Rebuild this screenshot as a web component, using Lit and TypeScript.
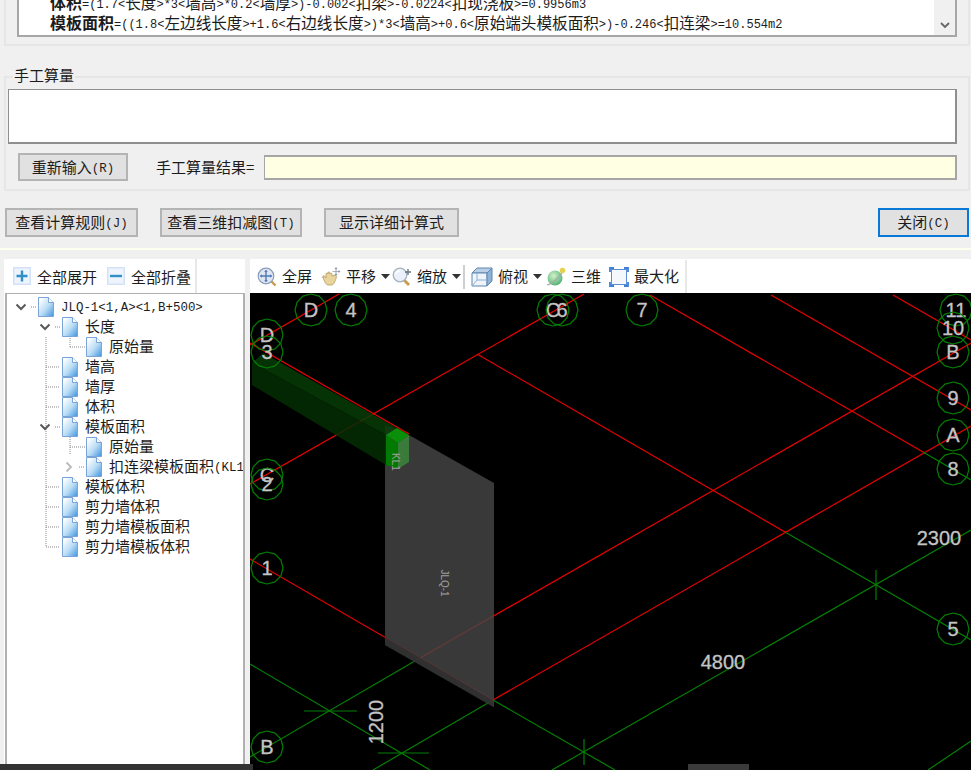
import { LitElement, css, html, svg } from 'lit';
import { customElement } from 'lit/decorators.js';

// latin runs sit in a mono face at half the CJK advance, like the original GDI font
const mix = (s: string) =>
  s.split(/([\x00-\x7f]+)/).map((p, i) => (i % 2 ? html`<span class="lat">${p}</span>` : p));

type TreeRow = { label: string; depth: number; toggle?: 'open' | 'closed' };

const TREE: TreeRow[] = [
  { label: 'JLQ-1<1,A><1,B+500>', depth: 0, toggle: 'open' },
  { label: '长度', depth: 1, toggle: 'open' },
  { label: '原始量', depth: 2 },
  { label: '墙高', depth: 1 },
  { label: '墙厚', depth: 1 },
  { label: '体积', depth: 1 },
  { label: '模板面积', depth: 1, toggle: 'open' },
  { label: '原始量', depth: 2 },
  { label: '扣连梁模板面积(KL1', depth: 2, toggle: 'closed' },
  { label: '模板体积', depth: 1 },
  { label: '剪力墙体积', depth: 1 },
  { label: '剪力墙模板面积', depth: 1 },
  { label: '剪力墙模板体积', depth: 1 },
];

// guide dots, in tree coordinates (tree box starts at 5,293)
const GUIDES = [
  [26, 14, 31, 14], [50, 34, 55, 34], [41, 44, 41, 254],
  [65, 45, 65, 54], [65, 54, 80, 54], [41, 74, 55, 74], [41, 94, 55, 94], [41, 114, 55, 114],
  [50, 134, 55, 134], [65, 144, 65, 162], [65, 154, 80, 154], [74, 174, 80, 174],
  [41, 194, 55, 194], [41, 214, 55, 214], [41, 234, 55, 234], [41, 254, 55, 254],
];

const RED = [
  [250, 345, 339, 294], [250, 484, 584, 294], [250, 343, 409, 434],
  [477, 354, 785, 532], [250, 559, 493, 700], [420, 658, 971, 343], [493, 700, 971, 426],
  [650, 295, 923, 452], [771, 295, 971, 410], [893, 295, 971, 340],
];

const GREEN = [
  [785, 532, 971, 640], [493, 700, 615, 770], [250, 757, 420, 658], [373, 770, 493, 700],
  [250, 664, 430, 770], [552, 770, 971, 530], [928, 770, 971, 741], [923, 452, 971, 480],
  [304, 711, 357, 711], [378, 753, 429, 753], [584, 739, 584, 765], [876, 570, 876, 600],
];

const BUBBLES: [number, number, string][] = [
  [311, 310, 'D'], [351, 310, '4'], [553, 310, 'C'], [562, 310, '6'], [642, 310, '7'],
  [267, 335, 'D'], [267, 352, '3'], [267, 475, 'C'], [267, 484, '2'], [267, 568, '1'], [267, 747, 'B'],
  [956, 310, '11'], [953, 328, '10'], [953, 352, 'B'], [953, 398, '9'], [953, 435, 'A'], [953, 469, '8'], [953, 629, '5'],
];

const ring = (cx: number, cy: number) =>
  Array.from({ length: 12 }, (_, i) => {
    const a = (i * Math.PI) / 6;
    return `${(cx + 16 * Math.sin(a)).toFixed(1)},${(cy - 16 * Math.cos(a)).toFixed(1)}`;
  }).join(' ');

const docIcon = html`<svg class="doc" width="16" height="20" viewBox="0 0 16 20">
  <defs><linearGradient id="dg" x1="0" y1="0" x2="1" y2="1">
    <stop offset="0.1" stop-color="#fff" /><stop offset="0.55" stop-color="#b9dcf5" /><stop offset="1" stop-color="#3f93de" />
  </linearGradient></defs>
  <path d="M.5.5H10.5L15.5 5.5V19.5H.5Z" fill="url(#dg)" stroke="#7aa3d8" />
  <path d="M10.5.5V5.5H15.5" fill="#fff" stroke="#7aa3d8" />
</svg>`;

const chevron = (kind: 'open' | 'closed') =>
  kind === 'open'
    ? html`<svg width="12" height="8" viewBox="0 0 12 8"><path d="M1.5 1.5 6 6l4.5-4.5" fill="none" stroke="#595959" stroke-width="2" /></svg>`
    : html`<svg width="8" height="12" viewBox="0 0 8 12"><path d="M1.5 1.5 6 6l-4.5 4.5" fill="none" stroke="#bdbdbd" stroke-width="2" /></svg>`;

const caret = html`<svg class="caret" width="9" height="5" viewBox="0 0 9 5"><path d="M0 0h9L4.5 5Z" fill="#333" /></svg>`;

const icons = {
  plus: html`<svg width="18" height="18" viewBox="0 0 18 18"><rect width="18" height="18" fill="#d3e2f8" /><rect x="1.500" y="1.500" width="15" height="15" fill="#eef4fc" /><path d="M3.500 9h11M9 3.500v11" stroke="#2f8fc8" stroke-width="2.400" /></svg>`,
  minus: html`<svg width="18" height="18" viewBox="0 0 18 18"><rect width="18" height="18" fill="#d3e2f8" /><rect x="1.500" y="1.500" width="15" height="15" fill="#eef4fc" /><path d="M3 9h12" stroke="#2f8fc8" stroke-width="2.400" /></svg>`,
  full: html`<svg width="20" height="20" viewBox="0 0 20 20"><path d="M14 14l4.500 4.500" stroke="#c99a4a" stroke-width="2.400" /><circle cx="9" cy="9" r="7.800" fill="#dfe6f2" stroke="#8b9cb8" stroke-width="1.200" /><path d="M9 3.500v11M3.500 9h11" stroke="#4f79b8" stroke-width="1.400" /><path d="M9 2.800 7.200 5h3.600ZM9 15.200 7.200 13h3.600ZM2.800 9 5 7.200v3.600ZM15.200 9 13 7.200v3.600Z" fill="#4f79b8" /></svg>`,
  pan: html`<svg width="20" height="20" viewBox="0 0 20 20"><path d="M2 11c-1-2 1-3 2-1.500L5 11V7c0-1.500 2-1.500 2 0V6c0-1.500 2-1.500 2 0v1c0-1 2-1 2 0v2l2-.5c2-.5 3 .5 2 3-1 3-2 6.500-5 6.500H7c-2 0-4-4-5-8Z" fill="#e8d49c" stroke="#b59a5e" stroke-width=".8" /><path d="M15 1v7M11.500 4.500h7" stroke="#a7b0bc" stroke-width="1.200" /><path d="M15 0l-1.500 2h3ZM19.500 4.500l-2-1.500v3ZM15 9l-1.500-2h3Z" fill="#8d97a4" /></svg>`,
  zoom: html`<svg width="20" height="20" viewBox="0 0 20 20"><path d="M12 13l5 5" stroke="#c99a4a" stroke-width="2.800" /><circle cx="8" cy="8" r="6.800" fill="#eaf1fa" stroke="#a7b2c0" stroke-width="1.300" /><path d="M4 7a4 4 0 0 1 4-3" stroke="#fff" stroke-width="1.500" fill="none" /><path d="M16 2v6M13 5h6" stroke="#66707c" stroke-width="1.300" /></svg>`,
  cube: html`<svg width="22" height="20" viewBox="0 0 22 20"><path d="M1 6 6 1H21L16 6Z" fill="#b9cfe6" stroke="#5f86b0" /><path d="M1 6H16V19H1Z" fill="#eef4fa" stroke="#5f86b0" /><path d="M16 6 21 1V14L16 19Z" fill="#8fb2d4" stroke="#5f86b0" /><path d="M1 19 6 13H16M6 13V6" fill="none" stroke="#8fb2d4" /></svg>`,
  globe: html`<svg width="20" height="20" viewBox="0 0 20 20"><defs><radialGradient id="gg" cx=".4" cy=".35" r=".75"><stop offset="0" stop-color="#d4f0c8" /><stop offset="1" stop-color="#3fae6a" /></radialGradient></defs><circle cx="9" cy="11" r="7.500" fill="url(#gg)" /><path d="M1 18C6 17 14 10 18 3" fill="none" stroke="#a8a8a8" stroke-width="1.200" /><circle cx="16.500" cy="3.500" r="2.800" fill="#e4d24e" /></svg>`,
  max: html`<svg width="20" height="20" viewBox="0 0 20 20"><rect x="2.500" y="2.500" width="15" height="15" fill="#f4f8fd" stroke="#5b8fd9" /><path d="M1 5V1H5M15 1h4v4M19 15v4h-4M5 19H1v-4" fill="none" stroke="#3f7fd6" stroke-width="1.800" /></svg>`,
};

@customElement('app-root')
export class AppRoot extends LitElement {
  static override styles = css`
    :host {
      display: block;
      position: relative;
      width: 971px;
      height: 770px;
      overflow: hidden;
      background: #f0f0f0;
      color: #1c1c1c;
      font-family: 'Noto Sans CJK SC', sans-serif;
      font-size: 15px;
    }
    .lat {
      font-family: 'Liberation Mono', monospace;
      font-size: 0.83em;
      vertical-align: 1px;
    }
    svg {
      flex: none;
    }
    .dialog {
      height: 248px;
      display: flex;
      flex-direction: column;
    }
    .group {
      box-sizing: border-box;
      margin-left: 4px;
      width: 966px;
      border: 2px solid #e6e6e6;
    }
    .result {
      height: 46px;
      border-top: none;
      padding: 0 11px 7px 11px;
    }
    .formula {
      box-sizing: border-box;
      height: 37px;
      border: 1px solid #a6a6a6;
      border-width: 0 2px 2px 2px;
      background: #fff;
      display: flex;
      overflow: hidden;
    }
    .lines {
      flex: 1;
      padding-left: 31px;
      margin-top: -8px;
      font-size: 15.6px;
      white-space: nowrap;
      overflow: hidden;
    }
    .lines > div {
      height: 20px;
      line-height: 20px;
    }
    .lines .lat {
      font-size: 12px;
    }
    .lines b {
      font-size: 16px;
    }
    .scroll {
      width: 21px;
      background: #f0f0f0;
      display: flex;
      align-items: flex-end;
      justify-content: center;
      padding-bottom: 6px;
    }
    .manual {
      position: relative;
      margin-top: 30px;
      height: 115px;
      padding: 11px 11px 0 2px;
    }
    .legend {
      position: absolute;
      left: 7px;
      top: -13px;
      padding: 0 1px;
      line-height: 20px;
      background: #f0f0f0;
    }
    .area {
      height: 55px;
      box-sizing: border-box;
      border: 2px solid #8f8f8f;
      border-width: 1px 2px 2px 1px;
      background: #fff;
    }
    .inputrow {
      display: flex;
      align-items: center;
      margin: 9px 0 0 10px;
    }
    .btn {
      box-sizing: border-box;
      height: 29px;
      display: flex;
      align-items: center;
      justify-content: center;
      padding-bottom: 2px;
      background: #e1e1e1;
      border: 2px solid #b4b4b4;
      white-space: nowrap;
    }
    .inputrow .btn {
      width: 110px;
      height: 28px;
    }
    .reslabel {
      margin: 0 0 2px 28px;
      width: 108px;
      white-space: nowrap;
    }
    .resval {
      flex: 1;
      height: 25px;
      box-sizing: border-box;
      background: #ffffe3;
      border: 2px solid #a6a6a6;
      border-width: 2px 2px 2px 1px;
    }
    .actions {
      display: flex;
      margin: 17px 2px 0 5px;
    }
    .actions .close {
      margin-left: auto;
      width: 91px;
      border-color: #0a78d7;
    }
    .strip {
      height: 2px;
      background: #fffff0;
    }
    .lower {
      display: flex;
      padding-top: 9px;
      height: 511px;
    }
    .left {
      width: 241px;
      margin-left: 4px;
      display: flex;
      flex-direction: column;
      background: #fff;
    }
    .bar {
      height: 34px;
      flex: none;
      display: flex;
      align-items: center;
      background: #fff;
      white-space: nowrap;
    }
    .left .bar .tools {
      width: 193px;
      height: 34px;
      display: flex;
      align-items: center;
      box-sizing: border-box;
      padding-left: 9px;
      border-right: 2px solid #e8e8e8;
    }
    .tools span {
      margin: 0 10px 0 6px;
    }
    .tools span:last-child {
      margin-right: 0;
    }
    .tree {
      position: relative;
      flex: 1;
      margin-left: 1px;
      box-sizing: border-box;
      width: 240px;
      border: 2px solid #b0b0b0;
      border-width: 1px 2px 0 2px;
      padding-top: 3px;
      background: #fff;
      overflow: hidden;
    }
    .guides {
      position: absolute;
      left: -2px;
      top: -1px;
    }
    .row {
      position: relative;
      height: 20px;
      display: flex;
      align-items: center;
      white-space: nowrap;
    }
    .row .name {
      margin-bottom: 4px;
    }
    .arrow {
      width: 12px;
      flex: none;
      display: flex;
      justify-content: center;
      align-items: center;
    }
    .doc {
      margin-left: 11px;
      margin-right: 7px;
    }
    .right {
      margin-left: 5px;
      width: 721px;
      display: flex;
      flex-direction: column;
    }
    .right .bar {
      padding: 1px 0 0 7px;
      box-sizing: border-box;
    }
    .tool {
      display: flex;
      align-items: center;
      gap: 5px;
    }
    .lbl {
      margin-bottom: 2px;
    }
    .sep {
      width: 2px;
      height: 24px;
      background: #cfcfcf;
    }
    .canvas {
      display: block;
      background: #000;
    }
    .canvas text {
      font-family: 'Liberation Sans', sans-serif;
      font-size: 20px;
      fill: #c4c4c4;
      stroke: #c4c4c4;
      stroke-width: 0.3;
      text-anchor: middle;
      dominant-baseline: central;
    }
    .canvas text.tag {
      font-size: 10px;
      fill: #a0a0a0;
      stroke: none;
    }
    .scrap {
      position: absolute;
      height: 6px;
      bottom: 0;
      background: #333;
    }
    .scrap.a {
      left: 0;
      width: 253px;
    }
    .scrap.b {
      left: 688px;
      width: 61px;
      background: #3a3a3a;
    }
  `;

  private renderCanvas() {
    return html`<svg class="canvas" width="721" height="477" viewBox="250 293 721 477">
      ${RED.map(([a, b, c, d]) => svg`<line x1=${a} y1=${b} x2=${c} y2=${d} stroke="#e80000" stroke-width="1.200" />`)}
      ${GREEN.map(([a, b, c, d]) => svg`<line x1=${a} y1=${b} x2=${c} y2=${d} stroke="#047f04" stroke-width="1.200" />`)}
      <polygon points="385,425 409,435 494,483 494,707 385,645" fill="#464646" fill-opacity=".82" />
      <polygon points="385,637 493,700 493,707 385,645" fill="#2c2c2c" fill-opacity=".7" />
      <polygon points="252,363 263,353 397,428 386,435" fill="#063c06" fill-opacity=".85" />
      <polygon points="252,363 386,435 386,465 252,385" fill="#042d04" fill-opacity=".85" />
      <polygon points="386,435 397,428 409,435 398,443" fill="#0a8f0a" />
      <polygon points="386,435 398,443 398,469 386,465" fill="#007a00" />
      <polygon points="398,443 409,435 409,462 398,469" fill="#3a7a3a" />
      <text class="tag" transform="translate(395 462) rotate(90)">KL1</text>
      <text class="tag" transform="translate(444 583) rotate(90)">JLQ-1</text>
      ${BUBBLES.map(
        ([x, y, t]) => svg`<polygon points=${ring(x, y)} fill="none" stroke="#047f04" stroke-width="1.200" />
          <text x=${x} y=${y}>${t}</text>`,
      )}
      <text x="939" y="538">2300</text>
      <text x="723" y="662">4800</text>
      <text transform="translate(376 722) rotate(-90)">1200</text>
    </svg>`;
  }

  override render() {
    return html`
      <div class="dialog">
        <div class="group result">
          <div class="formula">
            <div class="lines">
              <div><b>体积</b>${mix('=(1.7<长度>*3<墙高>*0.2<墙厚>)-0.002<扣梁>-0.0224<扣现浇板>=0.9956m3')}</div>
              <div><b>模板面积</b>${mix('=((1.8<左边线长度>+1.6<右边线长度>)*3<墙高>+0.6<原始端头模板面积>)-0.246<扣连梁>=10.554m2')}</div>
            </div>
            <div class="scroll">
              <svg width="10" height="7" viewBox="0 0 10 7"><path d="M1 1l4 4 4-4" fill="none" stroke="#666" stroke-width="1.800" /></svg>
            </div>
          </div>
        </div>
        <div class="group manual">
          <div class="legend">手工算量</div>
          <div class="area"></div>
          <div class="inputrow">
            <div class="btn"><span>${mix('重新输入(R)')}</span></div>
            <div class="reslabel">手工算量结果=</div>
            <div class="resval"></div>
          </div>
        </div>
        <div class="actions">
          <div class="btn" style="width:133px"><span>${mix('查看计算规则(J)')}</span></div>
          <div class="btn" style="width:142px;margin-left:22px"><span>${mix('查看三维扣减图(T)')}</span></div>
          <div class="btn" style="width:135px;margin-left:22px">显示详细计算式</div>
          <div class="btn close"><span>${mix('关闭(C)')}</span></div>
        </div>
      </div>
      <div class="strip"></div>
      <div class="lower">
        <div class="left">
          <div class="bar">
            <div class="tools">
              ${icons.plus}<span>全部展开</span>${icons.minus}<span>全部折叠</span>
            </div>
          </div>
          <div class="tree">
            <svg class="guides" width="240" height="270">
              ${GUIDES.map(([a, b, c, d]) => svg`<line x1=${a} y1=${b} x2=${c} y2=${d} stroke="#8a8a8a" stroke-dasharray="1 1" />`)}
            </svg>
            ${TREE.map(
              (r) => html`<div class="row" style="padding-left:${8 + 24 * r.depth}px">
                <span class="arrow">${r.toggle ? chevron(r.toggle) : ''}</span>${docIcon}<span class="name">${mix(r.label)}</span>
              </div>`,
            )}
          </div>
        </div>
        <div class="right">
          <div class="bar">
            <div class="tool">${icons.full}<span class="lbl">全屏</span></div>
            <div class="tool" style="margin-left:9px">${icons.pan}<span class="lbl">平移</span>${caret}</div>
            <div class="tool" style="margin-left:2px">${icons.zoom}<span class="lbl">缩放</span>${caret}</div>
            <div class="sep" style="margin-left:2px"></div>
            <div class="tool" style="margin-left:6px">${icons.cube}<span class="lbl">俯视</span>${caret}</div>
            <div class="tool" style="margin-left:4px">${icons.globe}<span class="lbl">三维</span></div>
            <div class="tool" style="margin-left:8px">${icons.max}<span class="lbl">最大化</span></div>
            <div class="sep" style="margin-left:6px;height:33px;background:#e8e8e8"></div>
          </div>
          ${this.renderCanvas()}
        </div>
      </div>
      <div class="scrap a"></div>
      <div class="scrap b"></div>
    `;
  }
}
